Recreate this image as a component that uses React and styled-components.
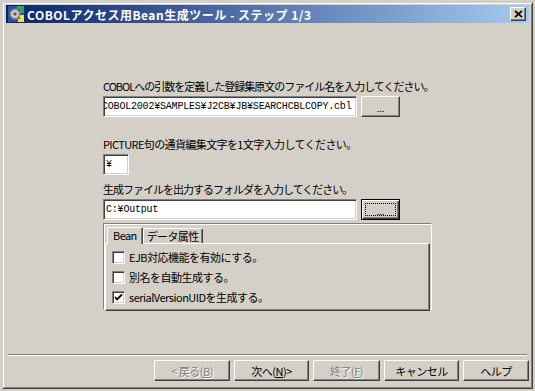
import React from 'react'
import styled, { createGlobalStyle } from 'styled-components'

const GlobalStyle = createGlobalStyle`
  html, body {
    margin: 0;
    padding: 0;
    background: #d4d0c8;
  }
  body {
    font-family: "Noto Sans CJK JP", "Liberation Sans", sans-serif;
    font-size: 11px;
    color: #000;
  }
`;

const Window = styled.div`
    box-sizing: border-box;
    width: 531px;
    height: 387px;
    margin: 2px;
    display: flex;
    flex-direction: column;
    padding: 2px 3px;
    background: #d4d0c8;
    border: 1px solid;
    border-color: #d4d0c8 #404040 #404040 #d4d0c8;
    box-shadow: inset 1px 1px #fff, inset -1px -1px #808080;
`;
const TitleBar = styled.div`
    height: 18px;
    display: flex;
    align-items: center;
    padding: 0 3px 0 2px;
    background: linear-gradient(to right, #0a246a, #a6caf0);
`;
const TitleText = styled.span`
    margin-left: 3px;
    color: #fff;
    font-weight: bold;
    font-size: 12px;
    letter-spacing: 0.5px;
    white-space: nowrap;
`;
const CloseButton = styled.div`
    box-sizing: border-box;
    margin-left: auto;
    width: 16px;
    height: 14px;
    display: flex;
    align-items: center;
    justify-content: center;
    background: #d4d0c8;
    border: 1px solid;
    border-color: #fff #404040 #404040 #fff;
    box-shadow: inset -1px -1px #808080;
`;
const Body = styled.div`
    flex: 1;
    display: flex;
    flex-direction: column;
    align-items: flex-start;
    padding: 56px 0 0 97px;
`;
const Label = styled.div`
    height: 14px;
    line-height: 14px;
    letter-spacing: ${p => p.$tight ? -1 : -0.6}px;
    white-space: nowrap;
    margin-top: ${p => p.$gap || 0}px;
`;
const FieldRow = styled.div`
    display: flex;
    gap: 4px;
    margin-top: 3px;
`;
const TextBox = styled.div`
    box-sizing: border-box;
    width: ${p => p.$width}px;
    height: 21px;
    margin-top: ${p => p.$gap || 0}px;
    padding-left: 2px;
    background: #fff;
    border: 1px solid;
    border-color: #808080 #fff #fff #808080;
    box-shadow: inset 1px 1px #404040, inset -1px -1px #d4d0c8;
    font-family: "Liberation Mono", monospace;
    font-size: 10px;
    letter-spacing: -0.2px;
    line-height: 19px;
    white-space: nowrap;
    overflow: hidden;
    text-indent: ${p => p.$indent || 0}px;
`;
const PushButton = styled.div`
    box-sizing: border-box;
    position: relative;
    width: ${p => p.$width}px;
    height: 21px;
    display: flex;
    align-items: center;
    justify-content: center;
    background: #d4d0c8;
    border: 1px solid;
    border-color: ${p => p.$focused ? '#000' : '#fff #404040 #404040 #fff'};
    box-shadow: ${p => p.$focused
        ? 'inset 1px 1px #fff, inset -1px -1px #404040, inset -2px -2px #808080'
        : 'inset -1px -1px #808080'};
    color: ${p => p.$disabled ? '#808080' : '#000'};
    text-shadow: ${p => p.$disabled ? '1px 1px #fff' : 'none'};
    letter-spacing: -0.5px;
    white-space: nowrap;
    &::after {
        content: '';
        display: ${p => p.$focused ? 'block' : 'none'};
        position: absolute;
        inset: 3px;
        border: 1px dotted #000;
    }
`;
const Dots = styled.span`
    font-size: 9px;
    line-height: 9px;
    margin-top: 4px;
    letter-spacing: 0;
`;
const TabGroup = styled.div`
    box-sizing: border-box;
    width: 329px;
    height: 87px;
    margin-top: 3px;
    padding: 4px 1px 1px 1px;
    border: 1px solid;
    border-color: #808080 #fff #fff #808080;
    box-shadow: inset 1px 1px #fff;
    display: flex;
    flex-direction: column;
`;
const TabStrip = styled.div`
    height: 15px;
    display: flex;
    align-items: flex-end;
    padding-left: 4px;
`;
const Tab = styled.div`
    box-sizing: border-box;
    height: ${p => p.$active ? 17 : 15}px;
    margin-left: ${p => p.$active ? -2 : 0}px;
    margin-bottom: ${p => p.$active ? -1 : 0}px;
    padding: 0 ${p => p.$active ? 5 : 3}px;
    position: relative;
    z-index: ${p => p.$active ? 1 : 0};
    background: #d4d0c8;
    border-top: 1px solid #fff;
    border-left: 1px solid #fff;
    border-right: 1px solid #404040;
    box-shadow: inset -1px 0 #808080;
    border-radius: 2px 2px 0 0;
    line-height: 14px;
    letter-spacing: -0.6px;
    white-space: nowrap;
`;
const TabPage = styled.div`
    box-sizing: border-box;
    flex: 1;
    padding: 5px 6px;
    border: 1px solid;
    border-color: #fff #404040 #404040 #fff;
    box-shadow: inset -1px -1px #808080;
    display: flex;
    flex-direction: column;
    gap: 4px;
`;
const CheckRow = styled.div`
    height: 16px;
    display: flex;
    align-items: center;
    gap: 4px;
    letter-spacing: -0.5px;
    white-space: nowrap;
`;
const CheckBox = styled.div`
    box-sizing: border-box;
    width: 13px;
    height: 13px;
    background: #fff;
    border: 1px solid;
    border-color: #808080 #fff #fff #808080;
    box-shadow: inset 1px 1px #404040, inset -1px -1px #d4d0c8;
    display: flex;
    align-items: center;
    justify-content: center;
`;
const Separator = styled.div`
    height: 0;
    margin: 0 2px;
    border-top: 1px solid #808080;
    border-bottom: 1px solid #fff;
`;
const ButtonBar = styled.div`
    display: flex;
    justify-content: flex-end;
    gap: 4px;
    padding: 4px 0 5px 0;
`;
const Key = styled.span`
    text-decoration: underline;
`;

function AppIcon() {
  return (
    <svg width="16" height="16" viewBox="0 0 16 16">
      <rect x="0" y="0" width="16" height="16" fill="#2a4fa8" />
      <rect x="9" y="0" width="7" height="7" fill="#2fa84a" />
      <rect x="10" y="9" width="6" height="7" fill="#f0e060" />
      <circle cx="7" cy="8" r="5.5" fill="#8c8c8c" />
      <circle cx="7" cy="8" r="4" fill="#c8c8c8" />
      <circle cx="7" cy="8" r="1.6" fill="#505050" />
      <path d="M2 3 L4 5 M12 3 L10 5 M2 13 L4 11 M12 13 L10 11" stroke="#606060" strokeWidth="1.5" />
    </svg>
  )
}

function Check() {
  return (
    <svg width="9" height="9" viewBox="0 0 9 9">
      <path d="M1 4 L3 6.5 L8 1.5" fill="none" stroke="#000" strokeWidth="1.8" />
    </svg>
  )
}

export default function App() {
  return (
    <>
      <GlobalStyle />
      <Window>
        <TitleBar>
          <AppIcon />
          <TitleText>COBOLアクセス用Bean生成ツール - ステップ 1/3</TitleText>
          <CloseButton>
            <svg width="9" height="8" viewBox="0 0 9 8">
              <path d="M1 0.8 L8 7.2 M8 0.8 L1 7.2" stroke="#000" strokeWidth="1.8" />
            </svg>
          </CloseButton>
        </TitleBar>
        <Body>
          <Label $tight>COBOLへの引数を定義した登録集原文のファイル名を入力してください。</Label>
          <FieldRow>
            <TextBox $width={254} $indent={-4}>COBOL2002¥SAMPLES¥J2CB¥JB¥SEARCHCBLCOPY.cbl</TextBox>
            <PushButton $width={39}><Dots>...</Dots></PushButton>
          </FieldRow>
          <Label $gap={20}>PICTURE句の通貨編集文字を1文字入力してください。</Label>
          <TextBox $width={26} $gap={3}>¥</TextBox>
          <Label $gap={7} $tight>生成ファイルを出力するフォルダを入力してください。</Label>
          <FieldRow>
            <TextBox $width={254}>C:¥Output</TextBox>
            <PushButton $width={39} $focused><Dots>...</Dots></PushButton>
          </FieldRow>
          <TabGroup>
            <TabStrip>
              <Tab $active>Bean</Tab>
              <Tab>データ属性</Tab>
            </TabStrip>
            <TabPage>
              <CheckRow><CheckBox />EJB対応機能を有効にする。</CheckRow>
              <CheckRow><CheckBox />別名を自動生成する。</CheckRow>
              <CheckRow><CheckBox><Check /></CheckBox>serialVersionUIDを生成する。</CheckRow>
            </TabPage>
          </TabGroup>
        </Body>
        <Separator />
        <ButtonBar>
          <PushButton $width={76} $disabled>&lt; 戻る(<Key>B</Key>)</PushButton>
          <PushButton $width={75}>次へ(<Key>N</Key>)&gt;</PushButton>
          <PushButton $width={67} $disabled>終了(<Key>F</Key>)</PushButton>
          <PushButton $width={75}>キャンセル</PushButton>
          <PushButton $width={66}>ヘルプ</PushButton>
        </ButtonBar>
      </Window>
    </>
  )
}
